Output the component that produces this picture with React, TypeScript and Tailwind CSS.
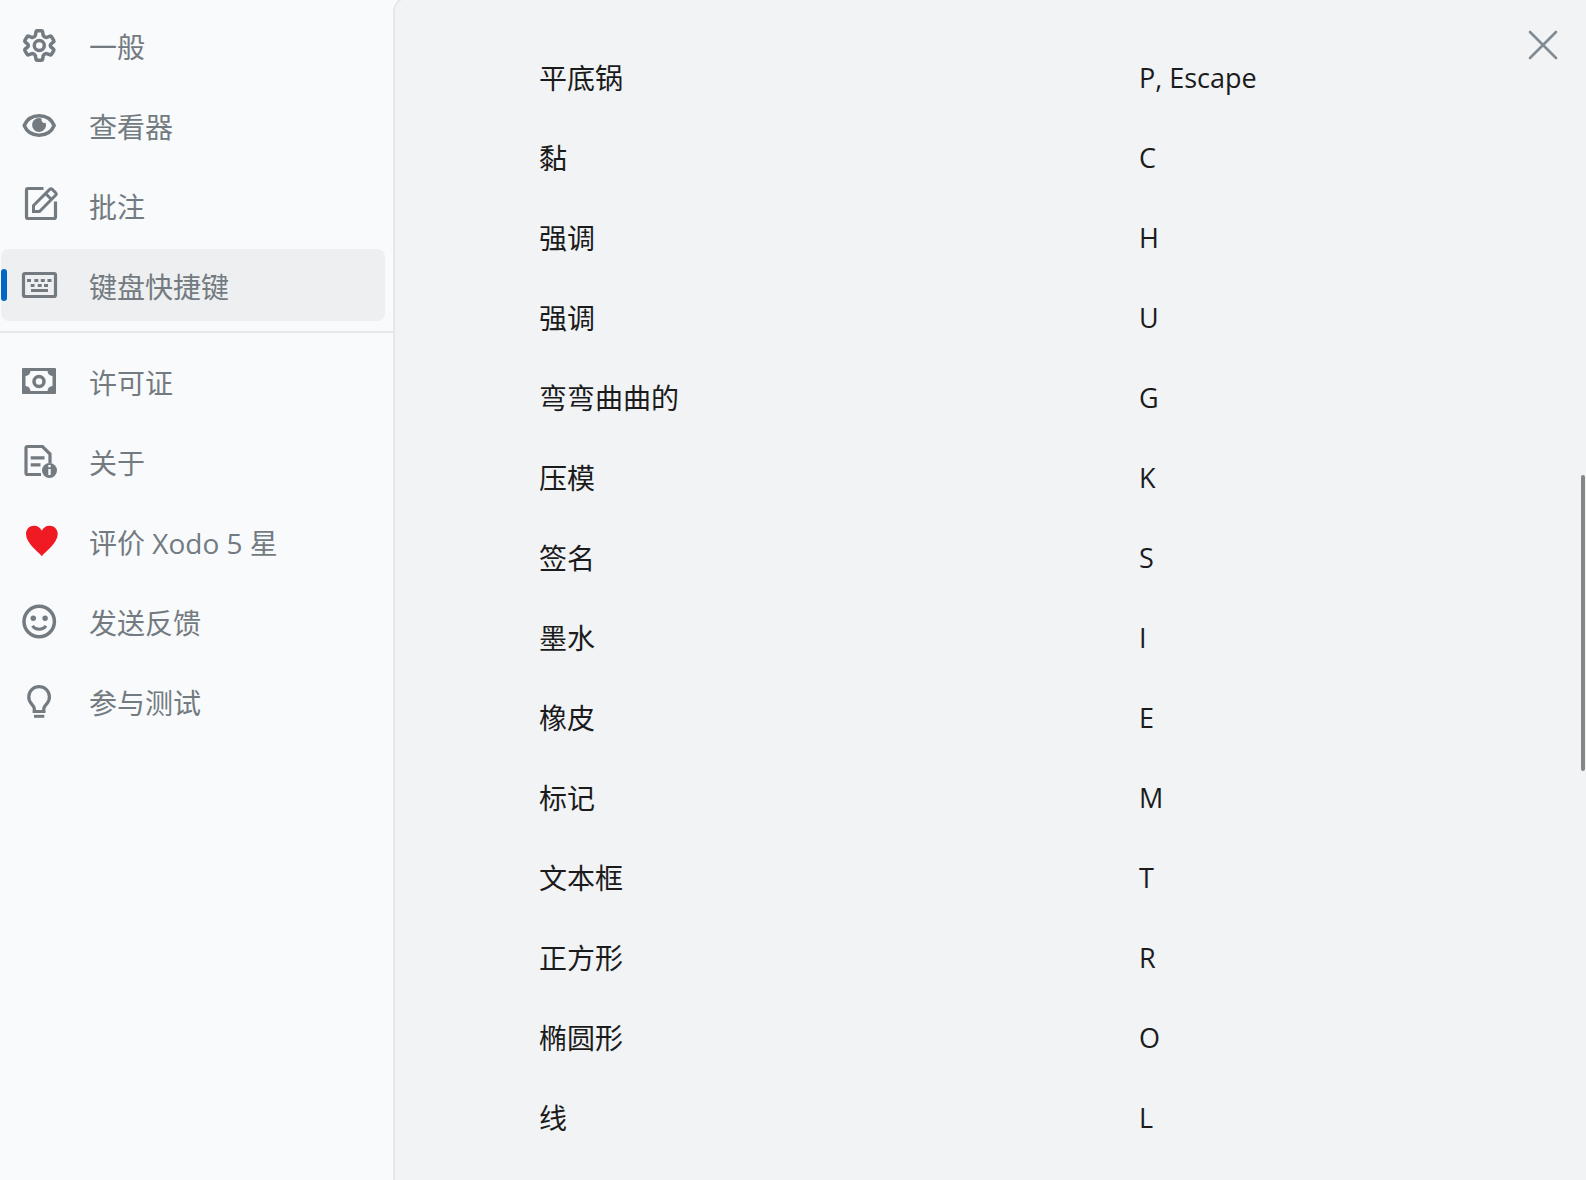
import type { ReactNode } from "react";
import clsx from "clsx";

type NavItem = { label: string; icon: ReactNode; active?: boolean };

function Icon({ children }: { children: ReactNode }) {
  return (
    <svg viewBox="0 0 40 40" className="size-10 shrink-0" fill="none" stroke="currentColor" strokeWidth="3.5" aria-hidden>
      {children}
    </svg>
  );
}

const mainItems: NavItem[] = [
  {
    label: "一般",
    icon: (
      <Icon>
        <path
          strokeLinejoin="round"
          d="M18.2 5.700h4.200q1 0 1.200 1l.6 3.600q.2.700.8 1.100l1.400.8q.7.400 1.400.1l3.300-1.100q1-.3 1.500.6l2.100 3.600q.5.900-.2 1.500l-2.600 2.200q-.6.600-.6 1.400t.6 1.400l2.600 2.200q.7.600.2 1.500l-2.100 3.600q-.5.900-1.500.6l-3.300-1.100q-.7-.3-1.400.1l-1.400.8q-.6.400-.8 1.100l-.6 3.600q-.2 1-1.200 1h-4.200q-1 0-1.200-1l-.6-3.600q-.2-.7-.8-1.100l-1.400-.8q-.7-.4-1.400-.1l-3.300 1.100q-1 .3-1.500-.6l-2.100-3.600q-.5-.9.2-1.500l2.600-2.200q.6-.6.6-1.400t-.6-1.400l-2.600-2.200q-.7-.6-.2-1.500l2.100-3.600q.5-.9 1.500-.6l3.300 1.100q.7.300 1.400-.1l1.400-.8q.6-.4.8-1.100l.6-3.600q.2-1 1.200-1z"
        />
        <circle cx="20.300" cy="20.500" r="5" />
      </Icon>
    ),
  },
  {
    label: "查看器",
    icon: (
      <Icon>
        <path d="M5.200 20.500C8 14 13.500 10.800 20.200 10.800S32.400 14 35.200 20.500C32.400 27 26.900 30.200 20.200 30.200S8 27 5.200 20.500z" strokeLinejoin="round" />
        <path stroke="none" fill="currentColor" d="M22.800 13.500a3 3 0 0 0 3.900 4.200A7 7 0 1 1 22.800 13.500z" />
      </Icon>
    ),
  },
  {
    label: "批注",
    icon: (
      <Icon>
        <path d="M24.500 3.500H9Q7.500 3.500 7.500 5V32Q7.500 33.500 9 33.500H35Q36.500 33.500 36.500 32V16.500" strokeWidth="3.200" />
        <path d="M14.500 26.500V20.500L30.700 4.400Q32 3.200 33.300 4.400L36.600 7.700Q37.800 9 36.600 10.300L20.500 26.500zM26.500 8.500L32.500 14.500" strokeWidth="3" />
      </Icon>
    ),
  },
  {
    label: "键盘快捷键",
    active: true,
    icon: (
      <Icon>
        <rect x="4.500" y="8.500" width="32" height="23" rx="1.500" strokeWidth="3.200" />
        <path d="M8 15.500h4M15.300 15.500h4M21.800 15.500h4M28.500 15.500h4M11.700 20.500h3.800M18.700 20.500h4M25 20.500h4M12 25.500h17" strokeWidth="3" />
      </Icon>
    ),
  },
];

const moreItems: NavItem[] = [
  {
    label: "许可证",
    icon: (
      <Icon>
        <path
          stroke="none"
          fill="currentColor"
          fillRule="evenodd"
          d="M4 7H36Q37 7 37 8V32Q37 33 36 33H4Q3 33 3 32V8Q3 7 4 7zM11.500 10A5.500 5.500 0 0 1 6.500 15V25A5.500 5.500 0 0 1 11.500 30H28.500A5.500 5.500 0 0 1 33.500 25V15A5.500 5.500 0 0 1 28.500 10z"
        />
        <circle cx="20" cy="20.500" r="5" />
      </Icon>
    ),
  },
  {
    label: "关于",
    icon: (
      <Icon>
        <path d="M22 33.500H8.500Q7 33.500 7 32V7Q7 5.500 8.500 5.500H23.500L31 13V22M11.700 16.800H25.500M11.700 23.800H21.500" strokeWidth="3.200" />
        <circle cx="30.500" cy="29.500" r="7.500" fill="currentColor" stroke="none" />
        <path d="M30.500 24V26.200M30.500 28V34" stroke="#f8fafc" strokeWidth="2.400" />
      </Icon>
    ),
  },
  {
    label: "评价 Xodo 5 星",
    icon: (
      <Icon>
        <path
          stroke="none"
          fill="#f01a23"
          d="M22.800 35.300C19.500 30.500 7 22.500 7 13C7 8 10.500 4.700 15 4.700C18.800 4.700 21.500 6.800 22.800 9.800C24.100 6.800 26.800 4.700 30.600 4.700C35.100 4.700 38.700 8 38.700 13C38.700 22.500 26.100 30.500 22.800 35.300z"
        />
      </Icon>
    ),
  },
  {
    label: "发送反馈",
    icon: (
      <Icon>
        <circle cx="20.200" cy="20.500" r="15.200" />
        <circle cx="14.300" cy="17.300" r="2.700" fill="currentColor" stroke="none" />
        <circle cx="26.100" cy="17.300" r="2.700" fill="currentColor" stroke="none" />
        <path d="M13.400 24.800Q15.800 28.200 20.200 28.200T27 24.800" strokeWidth="3" />
      </Icon>
    ),
  },
  {
    label: "参与测试",
    icon: (
      <Icon>
        <path
          d="M15.300 30.500V27.500C15 25.500 13.500 24 12.300 22.600A10.300 10.300 0 1 1 27.900 22.600C26.600 24 25.100 25.500 24.800 27.500V30.500M13.600 30.500H26.500"
          strokeWidth="3.200"
        />
        <path d="M15 35.300H25.300" strokeWidth="3" />
      </Icon>
    ),
  },
];

const shortcuts = [
  ["平底锅", "P, Escape"],
  ["黏", "C"],
  ["强调", "H"],
  ["强调", "U"],
  ["弯弯曲曲的", "G"],
  ["压模", "K"],
  ["签名", "S"],
  ["墨水", "I"],
  ["橡皮", "E"],
  ["标记", "M"],
  ["文本框", "T"],
  ["正方形", "R"],
  ["椭圆形", "O"],
  ["线", "L"],
];

function NavList({ items }: { items: NavItem[] }) {
  return (
    <ul className="flex flex-col gap-2 py-2 pr-2 pl-px">
      {items.map((item) => (
        <li key={item.label}>
          <button
            type="button"
            aria-current={item.active ? "page" : undefined}
            className={clsx(
              "relative flex h-[72px] w-full items-center gap-[30px] rounded-lg pl-[18px] text-left",
              item.active && "bg-[#eeeff1]"
            )}
          >
            {item.active && <span className="absolute left-0 h-8 w-1.5 rounded-full bg-[#0067c5]" />}
            {item.icon}
            <span className="pt-1">{item.label}</span>
          </button>
        </li>
      ))}
    </ul>
  );
}

export default function App() {
  return (
    <div className="flex h-screen overflow-hidden bg-[#f8fafc] font-['Open_Sans','Noto_Sans_CJK_SC',sans-serif] text-[28px] leading-10">
      <nav className="w-[393px] shrink-0 pt-px text-[#737b81]">
        <NavList items={mainItems} />
        <hr className="mt-0.5 mb-1 border-t-2 border-[#e6e7e9]" />
        <NavList items={moreItems} />
      </nav>

      <main className="relative -mt-1 flex-1 rounded-tl-2xl border-t-2 border-l-2 border-[#e6e7e9] bg-[#f1f3f5] text-[#1b1b1c]">
        <button type="button" aria-label="关闭" className="absolute top-7 right-6 p-1 text-[#818b93]">
          <svg viewBox="0 0 30 30" className="size-[30px]" fill="none" stroke="currentColor" strokeWidth="2.600" strokeLinecap="round">
            <path d="M2 2L28 28M28 2L2 28" />
          </svg>
        </button>

        <div className="pt-10 pl-36">
          <table className="w-full table-fixed text-left">
            <tbody>
              {shortcuts.map(([name, keys]) => (
                <tr key={keys} className="h-20">
                  <th scope="row" className="w-[600px] font-normal">{name}</th>
                  <td className="text-[27px]">{keys}</td>
                </tr>
              ))}
            </tbody>
          </table>
        </div>

        <div className="absolute top-[477px] right-px h-[296px] w-1 rounded-full bg-[#868686]" />
      </main>
    </div>
  );
}
